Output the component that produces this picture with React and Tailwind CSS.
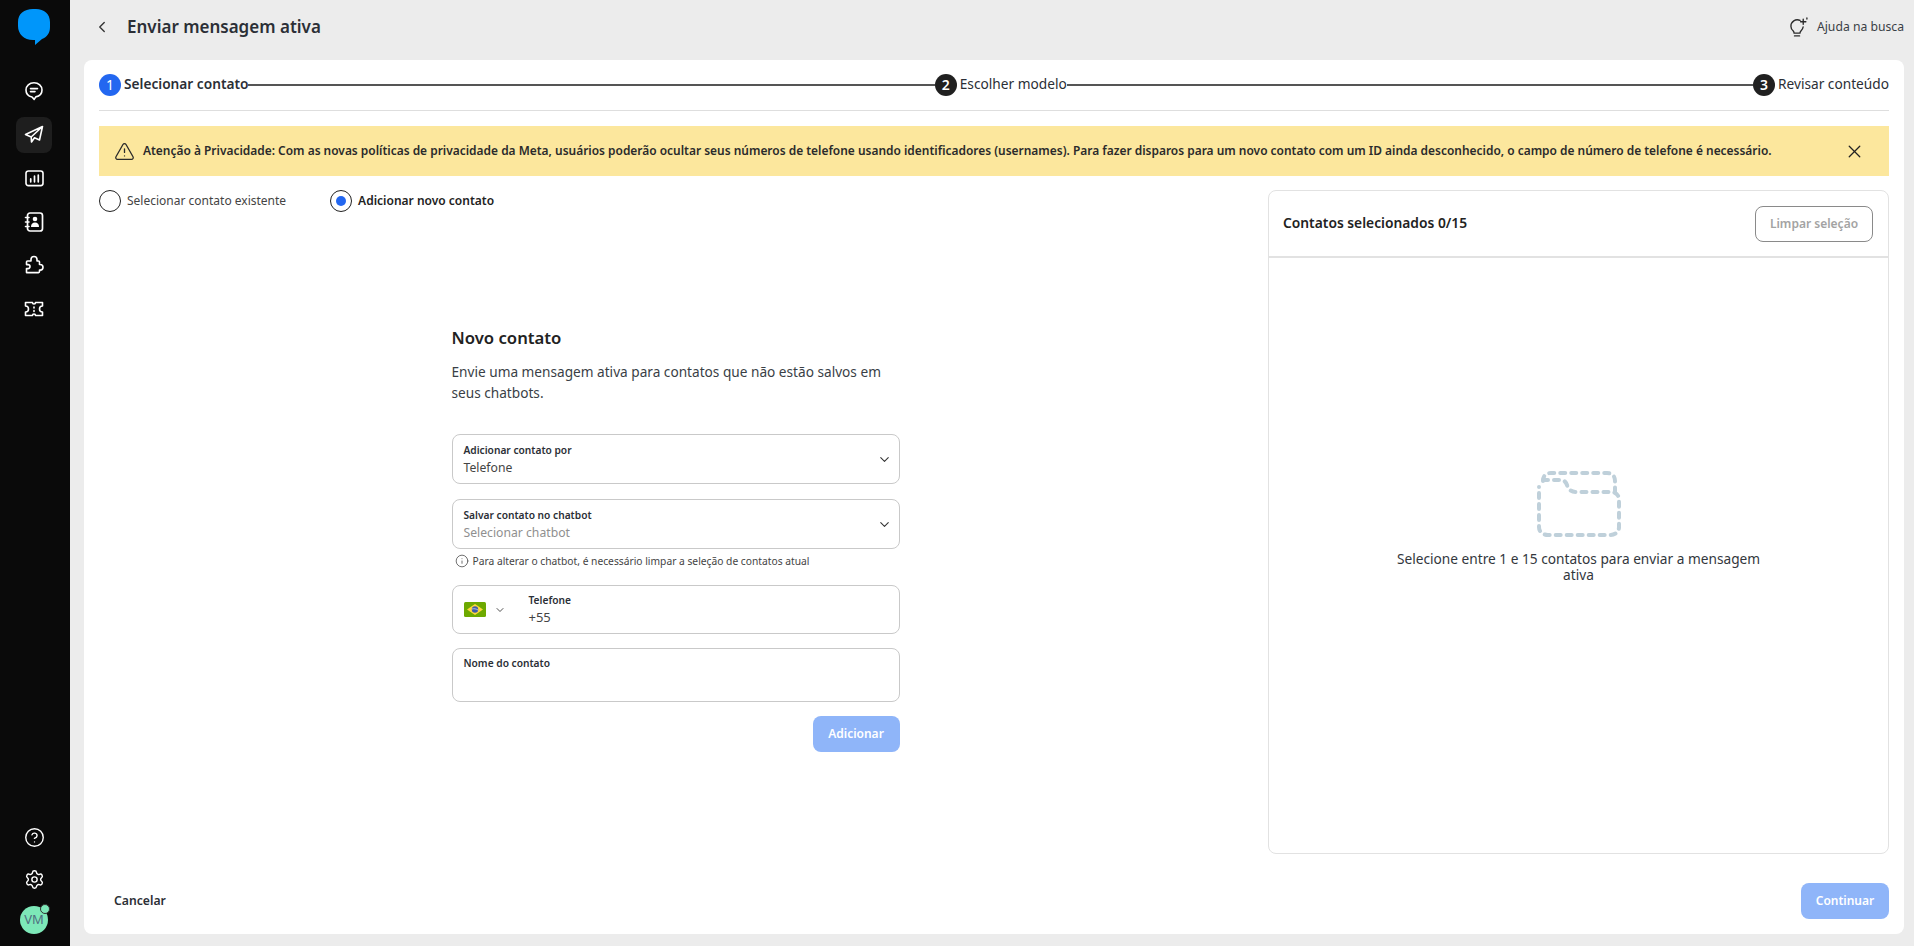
import React from "react";
import { ChevronDown, ChevronLeft, X, Info, TriangleAlert, Settings, CircleHelp } from "lucide-react";

const MessageIcon = () => (
  <svg width="20" height="20" viewBox="0 0 20 20" fill="none" stroke="white" strokeWidth="1.6" strokeLinecap="round" strokeLinejoin="round">
    <path d="M10 1.800c-4.600 0-8 3-8 7.200 0 3.600 2.500 6.300 6 7l2.200 2.400 1.600-2.500c3.600-.7 6.200-3.400 6.200-6.900 0-4.200-3.400-7.200-8-7.200z" />
    <path d="M6.500 7.600h7M6.500 10.600h4.500" />
  </svg>
);

const PlaneIcon = () => (
  <svg width="20" height="20" viewBox="0 0 20 20" fill="none" stroke="white" strokeWidth="1.6" strokeLinecap="round" strokeLinejoin="round">
    <path d="M18.500 1.500L1.500 9.500l5.700 2.500L18.500 1.500 15.500 15l-5-2.200-3 4.200-.3-5" />
  </svg>
);

const ChartIcon = () => (
  <svg width="19" height="17" viewBox="0 0 20 18" fill="none" stroke="white" strokeLinecap="round">
    <rect x="1" y="1" width="18" height="15.500" rx="2.500" strokeWidth="1.700" />
    <path d="M6 12.500v-3M10 12.500v-6M14 12.500v-7" strokeWidth="1.800" />
  </svg>
);

const ContactsIcon = () => (
  <svg width="20" height="20" viewBox="0 0 20 20" fill="none" stroke="white" strokeLinecap="round">
    <rect x="3.500" y="1" width="15" height="18" rx="2.500" strokeWidth="1.700" />
    <path d="M1.500 5.500h3.500M1.500 10h3.500M1.500 14.500h3.500" strokeWidth="1.600" />
    <circle cx="11" cy="7" r="2.300" fill="white" stroke="none" />
    <path d="M7 15c0-3 1.500-4.500 4-4.500s4 1.500 4 4.500z" fill="white" stroke="none" />
  </svg>
);

const PuzzleIcon = () => (
  <svg width="20" height="20" viewBox="0 0 20 20" fill="none" stroke="white" strokeWidth="1.6" strokeLinecap="round" strokeLinejoin="round">
    <path d="M7 6V4.500a3 3 0 0 1 6 0V6h1.500a1 1 0 0 1 1 1v2.500h.7a2.800 2.800 0 0 1 0 5.600h-.7v1.500a1 1 0 0 1-1 1H2.500v-4H4a2 2 0 0 0 0-4H2.500V7a1 1 0 0 1 1-1z" />
  </svg>
);

const TicketIcon = () => (
  <svg width="20" height="16" viewBox="0 0 20 16" fill="none" stroke="white" strokeWidth="1.6" strokeLinecap="round" strokeLinejoin="round">
    <path d="M1.500 1.500h7a1.500 1.500 0 0 0 3 0h7V5a3 3 0 0 0 0 6v3.500h-7a1.500 1.500 0 0 0-3 0h-7V11a3 3 0 0 0 0-6z" />
    <path d="M10 6v1M10 9.500v1" />
  </svg>
);

const BulbIcon = () => (
  <svg width="21" height="21" viewBox="0 0 20 20" fill="none" stroke="#2b2b2b" strokeWidth="1.300" strokeLinecap="round" strokeLinejoin="round">
    <path d="M11.500 3.300A6 6 0 0 0 2.800 9c0 2 1 3.300 2.200 4.400.6.600.8 1.200.8 2h5.600c0-.8.300-1.500.9-2.100 1-1 1.900-2.200 2.100-3.800" />
    <path d="M6.200 18h4.800" />
    <path d="M14.500 2v5M12 4.500h5M18 1v1" />
  </svg>
);

const Flag = () => (
  <svg width="22" height="15" viewBox="0 0 22 15">
    <rect width="22" height="15" rx="1.500" fill="#6da900" />
    <path d="M11 2l8 5.500-8 5.500-8-5.500z" fill="#ffd83d" />
    <circle cx="11" cy="7.500" r="3.200" fill="#3f5ca8" />
    <path d="M8 7c2-.6 4.200-.2 6 1" stroke="#e8e8e8" strokeWidth=".7" fill="none" />
  </svg>
);

const FolderDashed = () => (
  <svg width="84" height="66" viewBox="0 0 84 66" fill="none" stroke="#bfd0da" strokeWidth="4" strokeLinecap="round" strokeLinejoin="round" strokeDasharray="5 6">
    <path d="M6 10c0-5 3-8 8-8h56c5 0 8 3 8 8v12" />
    <path d="M6 9h18c3 0 5 2 6 5 1 4 4 7 9 7h35c5 0 8 3 8 8v27c0 5-4 8-9 8H11c-5 0-9-3-9-8V16" />
  </svg>
);

const railIcons = [
  { key: "chat", icon: <MessageIcon /> },
  { key: "send", icon: <PlaneIcon />, active: true },
  { key: "chart", icon: <ChartIcon /> },
  { key: "contacts", icon: <ContactsIcon /> },
  { key: "puzzle", icon: <PuzzleIcon /> },
  { key: "ticket", icon: <TicketIcon /> },
];

const Rail = () => (
  <aside className="w-[70px] h-full shrink-0 bg-[#0a0a0a] flex flex-col items-center pt-[9px] pb-[12px]">
    <svg width="32" height="36" viewBox="0 0 32 36" className="mb-[28px] -translate-x-[1px]">
      <path d="M15 0h3c8 0 14 5 14 13v5c0 6-3 10-8 12l-7 6v-5h-2C6 31 0 25 0 17v-4C0 5 6 0 15 0z" fill="#0096fa" />
    </svg>
    <div className="flex flex-col items-center gap-[7.500px] -translate-x-[1px]">
      {railIcons.map((item) => (
        <div key={item.key} className={`w-9 h-9 flex items-center justify-center rounded-lg ${item.active ? "bg-[#1e1e1e]" : ""}`}>
          {item.icon}
        </div>
      ))}
    </div>
    <div className="mt-auto flex flex-col items-center -translate-x-[1px]">
      <CircleHelp size={21} color="white" strokeWidth={1.6} />
      <Settings size={21} color="white" strokeWidth={1.6} className="mt-[21px]" />
      <div className="relative mt-[16px] w-[28px] h-[28px] rounded-full bg-[#7de8b8] flex items-center justify-center text-[13px] text-[#4f6f80]">
        VM
        <span className="absolute -top-[2px] -right-[2px] w-[10px] h-[10px] rounded-full bg-[#7de8b8] border border-[#333]" />
      </div>
    </div>
  </aside>
);

const Step = ({ n, label, active, line }) => (
  <>
    <div className="flex items-center gap-[3px] shrink-0">
      <span className={`w-[22px] h-[22px] rounded-full flex items-center justify-center text-[14px] text-white ${active ? "bg-[#2367f0]" : "bg-[#202020] font-semibold"}`}>{n}</span>
      <span className={`text-[13.700px] text-[#2b2f36] ${active ? "font-semibold" : ""}`}>{label}</span>
    </div>
    {line && <div className="flex-1 h-[2px] bg-[#555]" />}
  </>
);

const Radio = ({ label, checked }) => (
  <div className="flex items-center gap-[6px]">
    <span className="w-[22px] h-[22px] rounded-full border border-[#222] flex items-center justify-center">
      {checked && <span className="w-[10px] h-[10px] rounded-full bg-[#2367f0]" />}
    </span>
    <span className={`text-[12px] ${checked ? "font-semibold text-[#222]" : "text-[#444]"}`}>{label}</span>
  </div>
);

const SelectBox = ({ label, value, muted, className }) => (
  <div className={`h-[50px] border border-[#c9c9c9] rounded-lg pl-[11px] pr-[7px] flex items-center justify-between ${className}`}>
    <div className="flex flex-col">
      <span className="text-[10.200px] leading-[16px] font-semibold text-[#2b2f36]">{label}</span>
      <span className={`text-[12.200px] leading-[19px] ${muted ? "text-[#8f8f8f]" : "text-[#444]"}`}>{value}</span>
    </div>
    <ChevronDown size={15} color="#333" strokeWidth={1.700} />
  </div>
);

const NewContactForm = () => (
  <div className="w-[448px] flex flex-col">
    <h2 className="text-[16.700px] leading-[24px] font-semibold text-[#222]">Novo contato</h2>
    <p className="mt-[11px] text-[13.650px] leading-[21px] text-[#3a3f46]">
      Envie uma mensagem ativa para contatos que não estão salvos em seus chatbots.
    </p>
    <SelectBox label="Adicionar contato por" value="Telefone" className="mt-[31px]" />
    <SelectBox label="Salvar contato no chatbot" value="Selecionar chatbot" muted className="mt-[15px]" />
    <div className="mt-[3px] ml-[3px] flex items-center gap-[4px] text-[10.250px] leading-[18px] text-[#444]">
      <Info size={14} strokeWidth={1.300} />
      Para alterar o chatbot, é necessário limpar a seleção de contatos atual
    </div>
    <div className="mt-[15px] h-[49px] border border-[#c9c9c9] rounded-lg pl-[11px] flex items-center">
      <Flag />
      <ChevronDown size={12} color="#333" strokeWidth={1.700} className="ml-[8px]" />
      <div className="ml-[23px] flex flex-col">
        <span className="text-[10.200px] leading-[16px] font-semibold text-[#2b2f36]">Telefone</span>
        <span className="text-[13px] leading-[19px] text-[#444]">+55</span>
      </div>
    </div>
    <div className="mt-[14px] h-[54px] border border-[#c9c9c9] rounded-lg px-[11px] pt-[6px]">
      <span className="block text-[10.200px] leading-[16px] font-semibold text-[#2b2f36]">Nome do contato</span>
    </div>
    <button className="mt-[14px] self-end w-[87px] h-[36px] rounded-lg bg-[#8fb5f9] text-white text-[12px] font-semibold">Adicionar</button>
  </div>
);

const SelectedPanel = () => (
  <section className="w-[621px] shrink-0 border border-[#e2e2e2] rounded-lg flex flex-col">
    <div className="h-[67px] border-b-2 border-[#e2e2e2] pl-[14px] pr-[15px] flex items-center justify-between">
      <span className="text-[13.800px] font-semibold text-[#222]">Contatos selecionados 0/15</span>
      <button className="w-[118px] h-[36px] border border-[#8a8a8a] rounded-lg text-[12px] font-semibold text-[#a3a3a3]">Limpar seleção</button>
    </div>
    <div className="flex-1 flex flex-col items-center justify-center pb-[58px]">
      <FolderDashed />
      <p className="mt-[14px] w-[372px] text-center text-[13.700px] leading-[16px] text-[#33373d]">
        Selecione entre 1 e 15 contatos para enviar a mensagem ativa
      </p>
    </div>
  </section>
);

export default function App() {
  return (
    <div className="h-screen w-full flex overflow-hidden bg-[#ececec] font-['Noto_Sans',sans-serif]">
      <Rail />
      <div className="flex-1 min-w-0 flex flex-col pl-[14px] pr-[10px] pb-[12px]">
        <header className="h-[60px] shrink-0 pb-[6px] flex items-center justify-between">
          <div className="flex items-center">
            <ChevronLeft size={18} color="#333" strokeWidth={1.800} className="ml-[9px]" />
            <h1 className="ml-[16px] text-[17px] font-semibold text-[#2b2f36]">Enviar mensagem ativa</h1>
          </div>
          <div className="flex items-center gap-[8px] text-[12.200px] text-[#3a3f46]">
            <BulbIcon />
            Ajuda na busca
          </div>
        </header>
        <main className="flex-1 min-h-0 bg-white rounded-lg px-[15px] flex flex-col">
          <div className="h-[51px] shrink-0 border-b border-[#dedede] pb-[1px] flex items-center">
            <Step n="1" label="Selecionar contato" active line />
            <Step n="2" label="Escolher modelo" line />
            <Step n="3" label="Revisar conteúdo" />
          </div>
          <div className="mt-[15px] h-[50px] shrink-0 bg-[#fce79d] pl-[15px] pr-[24px] flex items-center justify-between">
            <div className="flex items-center gap-[8px] text-[11.950px] whitespace-nowrap font-semibold text-[#2b2b2b]">
              <TriangleAlert size={21} strokeWidth={1.500} />
              Atenção à Privacidade: Com as novas políticas de privacidade da Meta, usuários poderão ocultar seus números de telefone usando identificadores (usernames). Para fazer disparos para um novo contato com um ID ainda desconhecido, o campo de número de telefone é necessário.
            </div>
            <X size={21} color="#222" strokeWidth={1.500} />
          </div>
          <div className="mt-[14px] h-[664px] shrink-0 flex gap-[14px]">
            <div className="flex-1 min-w-0 flex flex-col">
              <div className="flex items-center gap-[44px]">
                <Radio label="Selecionar contato existente" />
                <Radio label="Adicionar novo contato" checked />
              </div>
              <div className="flex justify-center mt-[114px] pr-[2px]">
                <NewContactForm />
              </div>
            </div>
            <SelectedPanel />
          </div>
          <div className="flex-1 flex items-end justify-between pl-[15px] pb-[15px]">
            <button className="h-[36px] text-[12.200px] font-semibold text-[#2b2f36]">Cancelar</button>
            <button className="w-[88px] h-[36px] rounded-lg bg-[#8fb5f9] text-white text-[12px] font-semibold">Continuar</button>
          </div>
        </main>
      </div>
    </div>
  );
}
